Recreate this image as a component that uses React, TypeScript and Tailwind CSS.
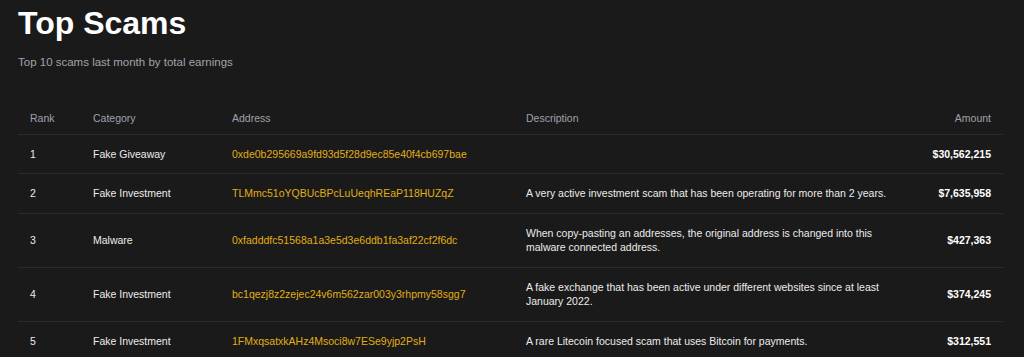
const scams = [
  {
    rank: 1,
    category: "Fake Giveaway",
    address: "0xde0b295669a9fd93d5f28d9ec85e40f4cb697bae",
    description: "",
    amount: "$30,562,215",
  },
  {
    rank: 2,
    category: "Fake Investment",
    address: "TLMmc51oYQBUcBPcLuUeqhREaP118HUZqZ",
    description: "A very active investment scam that has been operating for more than 2 years.",
    amount: "$7,635,958",
  },
  {
    rank: 3,
    category: "Malware",
    address: "0xfadddfc51568a1a3e5d3e6ddb1fa3af22cf2f6dc",
    description:
      "When copy-pasting an addresses, the original address is changed into this malware connected address.",
    amount: "$427,363",
  },
  {
    rank: 4,
    category: "Fake Investment",
    address: "bc1qezj8z2zejec24v6m562zar003y3rhpmy58sgg7",
    description: "A fake exchange that has been active under different websites since at least January 2022.",
    amount: "$374,245",
  },
  {
    rank: 5,
    category: "Fake Investment",
    address: "1FMxqsatxkAHz4Msoci8w7ESe9yjp2PsH",
    description: "A rare Litecoin focused scam that uses Bitcoin for payments.",
    amount: "$312,551",
  },
];

export default function App() {
  return (
    <main className="min-h-screen w-full bg-[#1a1a1a] px-[18px] font-['Liberation_Sans',Arial,sans-serif] text-white">
      {/* Heading */}
      <h1 className="pt-[3px] text-[32px] font-bold leading-[40px]">Top Scams</h1>
      <p className="mt-[11px] text-[11.5px] leading-[16px] text-[#a3a3ab]">Top 10 scams last month by total earnings</p>

      {/* Table */}
      <table className="mt-[33px] w-[985px] table-fixed border-collapse text-[10.5px] leading-[14.5px]">
        <colgroup>
          <col className="w-[63px]" />
          <col className="w-[139px]" />
          <col className="w-[294px]" />
          <col className="w-[400px]" />
          <col />
        </colgroup>
        <thead>
          <tr className="border-b border-[#2a2a2a] text-[#9ea2ab]">
            <th className="px-3 pt-2 pb-2 text-left font-normal">Rank</th>
            <th className="px-3 pt-2 pb-2 text-left font-normal">Category</th>
            <th className="px-3 pt-2 pb-2 text-left font-normal">Address</th>
            <th className="px-3 pt-2 pb-2 text-left font-normal">Description</th>
            <th className="px-3 pt-2 pb-2 text-right font-normal">Amount</th>
          </tr>
        </thead>
        <tbody>
          {scams.map((s) => (
            <tr key={s.rank} className="border-b border-[#2a2a2a] align-middle">
              <td className="px-3 py-3 text-[#ececec]">{s.rank}</td>
              <td className="px-3 py-3 text-[#ececec]">{s.category}</td>
              <td className="px-3 py-3 whitespace-nowrap text-[#e0ae17]">{s.address}</td>
              <td className="px-3 py-3 text-[#ececec]">{s.description}</td>
              <td className="px-3 py-3 text-right font-bold text-white">{s.amount}</td>
            </tr>
          ))}
        </tbody>
      </table>
    </main>
  );
}
